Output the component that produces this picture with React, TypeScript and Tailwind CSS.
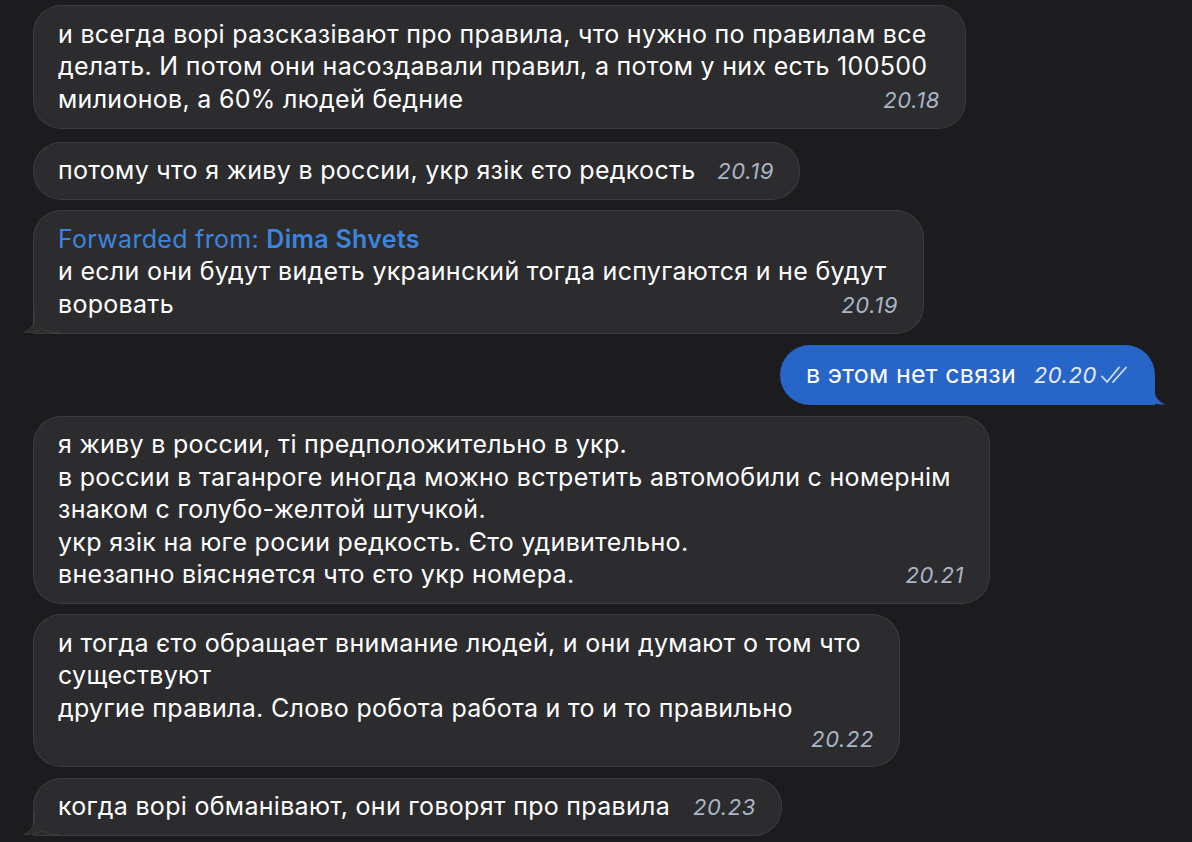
import React from "react";

const BG = "#2c2c2e";

function TailLeft() {
  return (
    <svg
      className="absolute left-[-11px] bottom-[-1px]"
      width="36"
      height="23"
      viewBox="0 0 36 23"
    >
      <path
        d="M11.5 0 V6 C11.5 13 8 18.5 0.5 21.5 C8 22 15 20.5 20 17.5 C24 20.5 28 21.5 36 21.5 V0 Z"
        fill={BG}
      />
      <path
        d="M11.5 0 V6 C11.5 13 8 18.5 0.5 21.5 C8 22 15 20.5 20 17.5 C24 20.5 28 21.5 36 21.5"
        fill="none"
        stroke="rgba(255,255,255,0.09)"
        strokeWidth="1"
      />
    </svg>
  );
}

function TailRight() {
  return (
    <svg
      className="absolute right-[-11px] bottom-0 scale-x-[-1]"
      width="36"
      height="22"
      viewBox="0 0 36 22"
    >
      <path
        d="M11.5 0 V6 C11.5 13 8 18.5 0.5 21.5 C8 22 15 20.5 20 17.5 C24 20.5 28 22 36 22 V0 Z"
        fill="#2865c9"
      />
    </svg>
  );
}

function Time({ t }: { t: string }) {
  return (
    <span className="italic text-[22px] text-[#aab5c6] tracking-[0.6px] whitespace-nowrap">
      {t}
    </span>
  );
}

function Bubble({
  w,
  mt,
  tail,
  children,
}: {
  w: string;
  mt: string;
  tail?: boolean;
  children: React.ReactNode;
}) {
  return (
    <div
      className={`relative ${w} ${mt} bg-[#2c2c2e] border border-white/[0.08] ${
        tail ? "rounded-[28px] rounded-bl-none" : "rounded-[28px]"
      } pl-[24px] pr-[25px] py-[11.5px] text-[25px] leading-[32.5px] tracking-[0.3px] text-white`}
    >
      {children}
      {tail && <TailLeft />}
    </div>
  );
}

export default function App() {
  return (
    <div
      className="w-[1192px] h-[842px] overflow-hidden bg-[#1c1c1e] pl-[33px] pt-[5px] flex flex-col items-start"
      style={{ fontFamily: "Inter, 'Noto Sans', sans-serif" }}
    >
      <Bubble w="w-[933px]" mt="mt-0">
        <div className="whitespace-nowrap">
          и всегда ворі разсказівают про правила, что нужно по правилам все
        </div>
        <div className="whitespace-nowrap">
          делать. И потом они насоздавали правил, а потом у них есть 100500
        </div>
        <div className="flex justify-between items-baseline">
          <span>милионов, а 60% людей бедние</span>
          <Time t="20.18" />
        </div>
      </Bubble>

      <Bubble w="w-[767px]" mt="mt-[13px]">
        <div className="flex justify-between items-baseline">
          <span className="whitespace-nowrap">
            потому что я живу в россии, укр язік єто редкость
          </span>
          <Time t="20.19" />
        </div>
      </Bubble>

      <Bubble w="w-[891px]" mt="mt-[10px]" tail>
        <div className="text-[#3d84de] whitespace-nowrap">
          Forwarded from: <span className="font-semibold">Dima Shvets</span>
        </div>
        <div className="whitespace-nowrap">
          и если они будут видеть украинский тогда испугаются и не будут
        </div>
        <div className="flex justify-between items-baseline">
          <span>воровать</span>
          <Time t="20.19" />
        </div>
      </Bubble>

      <div className="w-[1122px] flex justify-end mt-[11px]">
        <div className="relative w-[375px] bg-[#2865c9] rounded-[30px] rounded-br-none pl-[26px] pr-[25px] py-[13px] text-[25px] leading-[33px] tracking-[0.3px] text-white">
          <div className="flex justify-between items-baseline">
            <span className="whitespace-nowrap">в этом нет связи</span>
            <span className="flex items-baseline gap-[3px]">
              <span className="italic text-[22px] tracking-[0.6px] text-[#e6eefb] whitespace-nowrap">
                20.20
              </span>
              <svg
                width="30"
                height="20"
                viewBox="0 0 30 20"
                className="self-center"
              >
                <path
                  d="M2 11.5 L7 17 L19 2.5"
                  fill="none"
                  stroke="#cfe0f7"
                  strokeWidth="1.8"
                  strokeLinecap="round"
                  strokeLinejoin="round"
                />
                <path
                  d="M13 17 L26 2.5"
                  fill="none"
                  stroke="#cfe0f7"
                  strokeWidth="1.8"
                  strokeLinecap="round"
                />
              </svg>
            </span>
          </div>
          <TailRight />
        </div>
      </div>

      <Bubble w="w-[957px]" mt="mt-[11px]">
        <div className="whitespace-nowrap">
          я живу в россии, ті предположительно в укр.
        </div>
        <div className="whitespace-nowrap">
          в россии в таганроге иногда можно встретить автомобили с номернім
        </div>
        <div className="whitespace-nowrap">знаком с голубо-желтой штучкой.</div>
        <div className="whitespace-nowrap">
          укр язік на юге росии редкость. Єто удивительно.
        </div>
        <div className="flex justify-between items-baseline">
          <span className="whitespace-nowrap">
            внезапно віясняется что єто укр номера.
          </span>
          <Time t="20.21" />
        </div>
      </Bubble>

      <Bubble w="w-[867px]" mt="mt-[10px]">
        <div className="whitespace-nowrap">
          и тогда єто обращает внимание людей, и они думают о том что
        </div>
        <div className="whitespace-nowrap">существуют</div>
        <div className="whitespace-nowrap">
          другие правила. Слово робота работа и то и то правильно
        </div>
        <div className="flex justify-end items-baseline leading-[30px]">
          <Time t="20.22" />
        </div>
      </Bubble>

      <Bubble w="w-[749px]" mt="mt-[11px]" tail>
        <div className="flex justify-between items-baseline">
          <span className="whitespace-nowrap">
            когда ворі обманівают, они говорят про правила
          </span>
          <Time t="20.23" />
        </div>
      </Bubble>
    </div>
  );
}
